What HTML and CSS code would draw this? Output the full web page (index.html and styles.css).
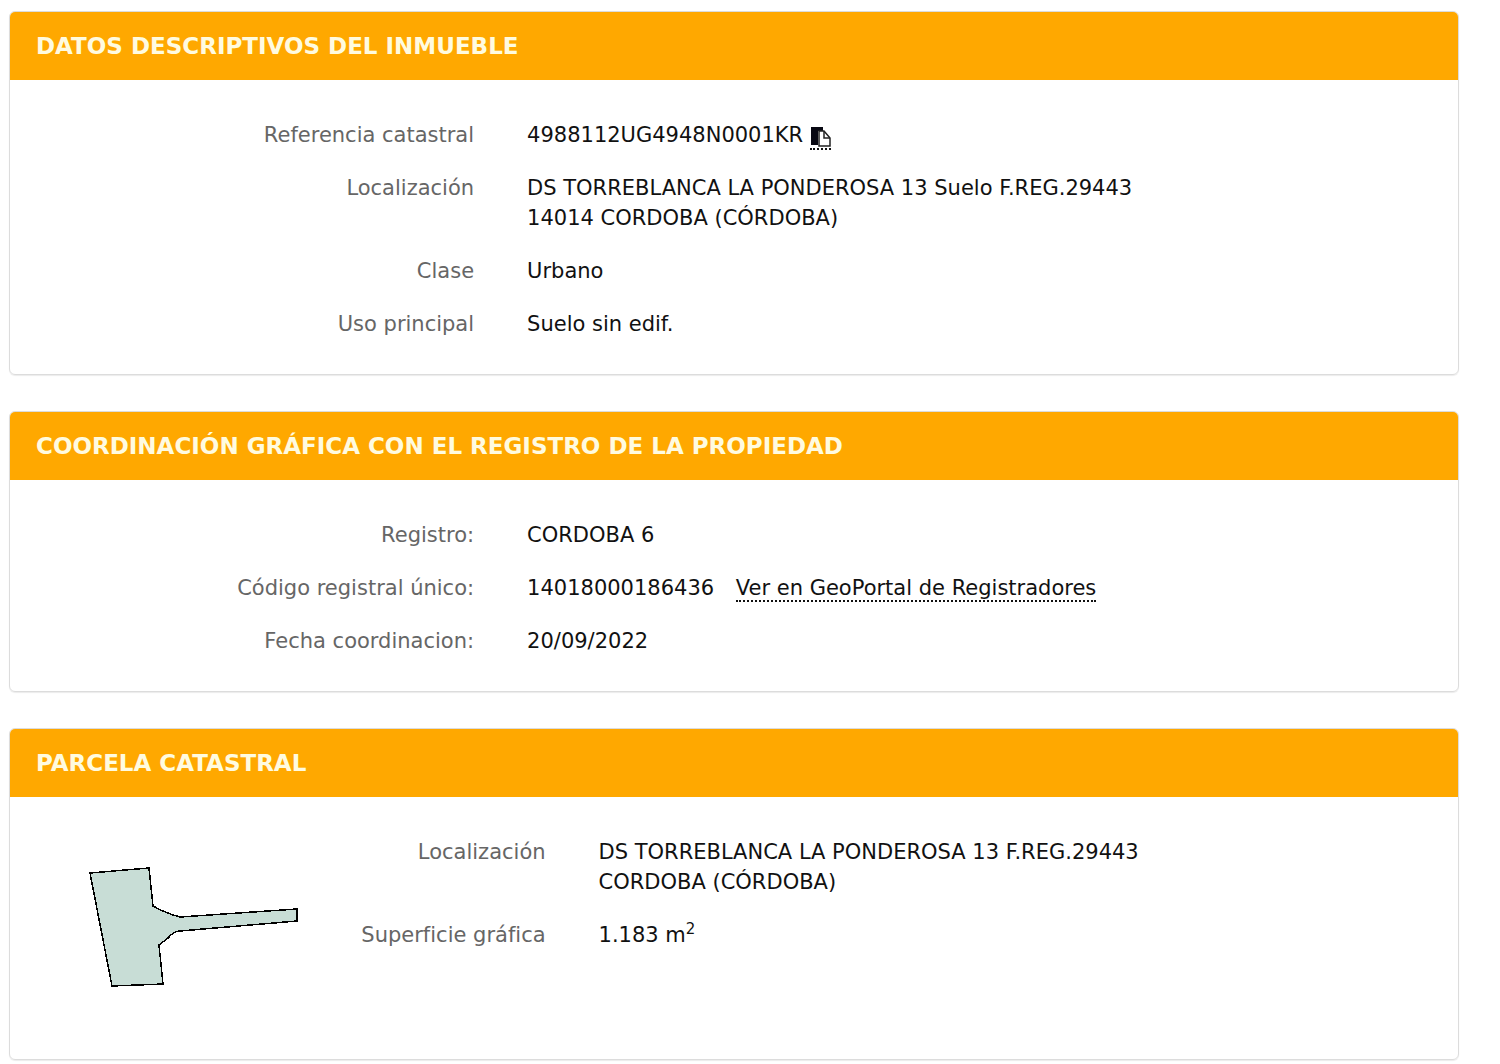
FILE: index.html
```html
<!DOCTYPE html>
<html lang="es">
<head>
    <meta charset="UTF-8">
    <meta name="viewport" content="width=device-width, initial-scale=1.0">
    <title>Datos del inmueble</title>
    <link rel="stylesheet" href="styles.css">
</head>
<body>
    <main>
        <section class="panel">
            <h2>DATOS DESCRIPTIVOS DEL INMUEBLE</h2>
            <div class="panel-body">
                <dl class="datos">
                    <dt>Referencia catastral</dt>
                    <dd>4988112UG4948N0001KR <button type="button" class="copy" aria-label="Copiar referencia">
                        <svg width="21" height="21" viewBox="0 0 21 21">
                            <path d="M1 0h12v4H8v14H1z" fill="#080812"/>
                            <path d="M9 4h5l6 7v8H9z" fill="#fff" stroke="#222" stroke-width="1.5"/>
                            <path d="M14 4v7h6" fill="none" stroke="#222" stroke-width="1.5"/>
                        </svg></button></dd>
                    <dt>Localización</dt>
                    <dd>DS TORREBLANCA LA PONDEROSA 13 Suelo F.REG.29443<br>14014 CORDOBA (CÓRDOBA)</dd>
                    <dt>Clase</dt>
                    <dd>Urbano</dd>
                    <dt>Uso principal</dt>
                    <dd>Suelo sin edif.</dd>
                </dl>
            </div>
        </section>

        <section class="panel">
            <h2>COORDINACIÓN GRÁFICA CON EL REGISTRO DE LA PROPIEDAD</h2>
            <div class="panel-body">
                <dl class="datos">
                    <dt>Registro:</dt>
                    <dd>CORDOBA 6</dd>
                    <dt>Código registral único:</dt>
                    <dd>14018000186436 <a href="#geoportal">Ver en GeoPortal de Registradores</a></dd>
                    <dt>Fecha coordinacion:</dt>
                    <dd>20/09/2022</dd>
                </dl>
            </div>
        </section>

        <section class="panel">
            <h2>PARCELA CATASTRAL</h2>
            <div class="panel-body parcela">
                <div class="croquis">
                    <svg width="212" height="122" viewBox="0 0 212 122" role="img" aria-label="Croquis de la parcela">
                        <path d="M2 6L61 1L65 39Q77 46 92 50L209 42V54L92 64Q86 64 80 71L71 78L75 117L24 119Z" fill="#c8ddd6" stroke="#000" stroke-width="1.5" shape-rendering="crispEdges"/>
                    </svg>
                </div>
                <dl class="datos">
                    <dt>Localización</dt>
                    <dd>DS TORREBLANCA LA PONDEROSA 13 F.REG.29443<br>CORDOBA (CÓRDOBA)</dd>
                    <dt>Superficie gráfica</dt>
                    <dd>1.183 m<sup>2</sup></dd>
                </dl>
            </div>
        </section>
    </main>
</body>
</html>
```
FILE: styles.css
```css
* {
    box-sizing: border-box;
}

body {
    margin: 0;
    padding: 11px 41px 4px 9px;
    background-color: #fff;
    font-family: Verdana, 'DejaVu Sans', sans-serif;
    font-size: 21px;
    line-height: 30px;
    color: #111;
}

.panel {
    margin-bottom: 36px;
    border: 1px solid #dcdcdc;
    border-radius: 6px;
    box-shadow: 0 1px 1px rgba(0, 0, 0, 0.08);
    overflow: hidden;
}

.panel:last-child {
    margin-bottom: 0;
}

.panel h2 {
    margin: 0;
    padding: 19px 26px;
    background-color: #ffa800;
    color: #fffbe0;
    font-size: 23px;
    font-weight: bold;
}

.panel-body {
    padding: 40px 2px 35px;
}

.datos {
    display: grid;
    grid-template-columns: 32% 1fr;
    align-content: start;
    gap: 23px 53px;
    margin: 0;
}

.datos dt {
    color: #666;
    text-align: right;
}

.datos dd {
    margin: 0;
}

.datos a {
    margin-left: 15px;
    color: inherit;
    text-decoration: none;
    border-bottom: 2px dotted #111;
}

.copy {
    padding: 0;
    border: 0;
    border-bottom: 2px dotted #111;
    background: none;
    vertical-align: -6px;
    line-height: 0;
    cursor: pointer;
}

.copy svg {
    display: block;
}

.parcela {
    display: flex;
    padding-bottom: 62px;
}

.parcela .datos {
    flex: 1;
    grid-template-columns: 19% 1fr;
}

.croquis {
    flex: 0 0 320px;
    height: 160px;
    padding: 30px 0 0 76px;
}

sup {
    font-size: 15px;
    line-height: 0;
}
```
